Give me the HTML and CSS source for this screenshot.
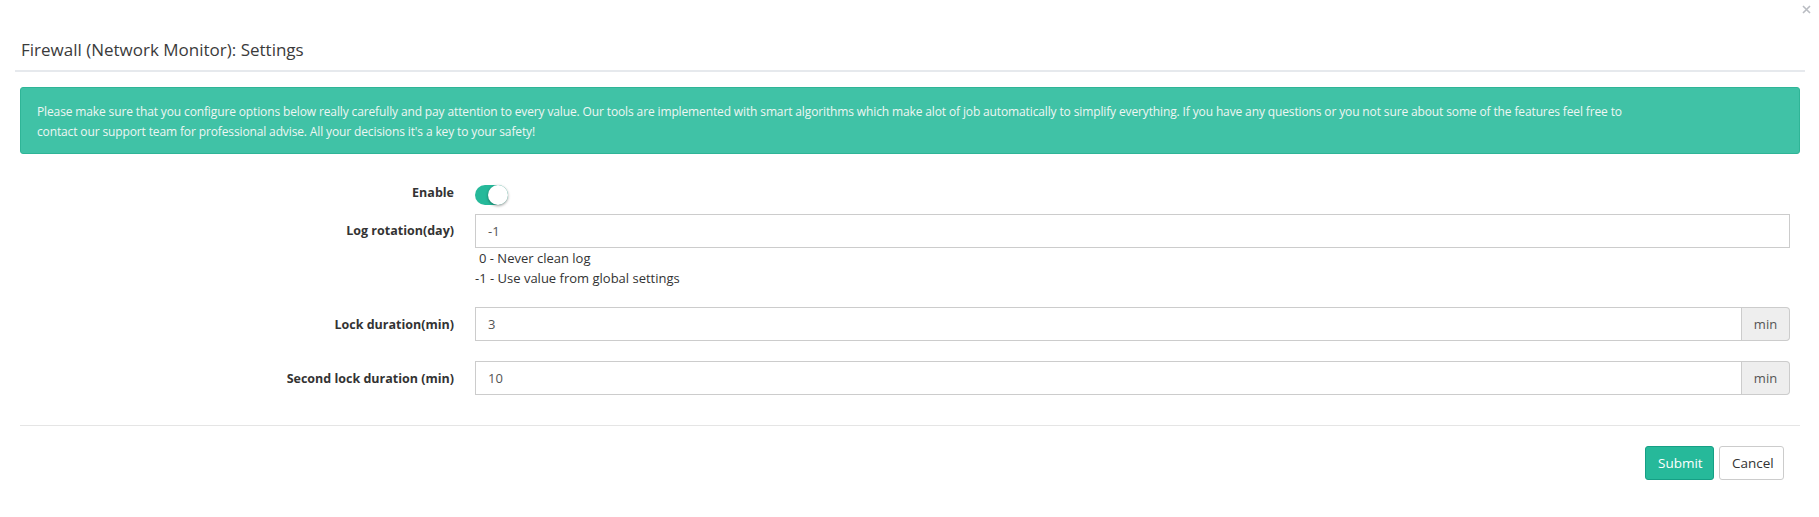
FILE: index.html
```html
<!DOCTYPE html>
<html lang="en">
<head>
<meta charset="utf-8">
<title>Firewall (Network Monitor): Settings</title>
<link rel="stylesheet" href="styles.css">
</head>
<body>
<div class="modal">
  <button class="close" type="button" aria-label="Close">
    <svg width="9" height="9" viewBox="0 0 9 9"><path d="M1 1L8 8M8 1L1 8" stroke="#b9bcc2" stroke-width="1.6" fill="none"/></svg>
  </button>
  <div class="modal-header">
    <h4 class="modal-title">Firewall (Network Monitor): Settings</h4>
  </div>
  <div class="modal-body">
    <div class="alert">Please make sure that you configure options below really carefully and pay attention to every value. Our tools are implemented with smart algorithms which make alot of job automatically to simplify everything. If you have any questions or you not sure about some of the features feel free to<br>contact our support team for professional advise. All your decisions it's a key to your safety!</div>
    <form class="form">
      <div class="row row-enable">
        <label class="lbl lbl-enable">Enable</label>
        <div class="ctrl"><span class="switch"><span class="knob"></span></span></div>
      </div>
      <div class="row row-top">
        <label class="lbl lbl-input">Log rotation(day)</label>
        <div class="ctrl">
          <input class="input" type="text" value="-1">
          <div class="help">
            <div class="help-line help-indent">0 - Never clean log</div>
            <div class="help-line">-1 - Use value from global settings</div>
          </div>
        </div>
      </div>
      <div class="row row-lock">
        <label class="lbl">Lock duration(min)</label>
        <div class="ctrl group">
          <input class="input input-group" type="text" value="3">
          <span class="addon">min</span>
        </div>
      </div>
      <div class="row row-lock2">
        <label class="lbl">Second lock duration (min)</label>
        <div class="ctrl group">
          <input class="input input-group" type="text" value="10">
          <span class="addon">min</span>
        </div>
      </div>
    </form>
  </div>
  <div class="modal-footer">
    <button class="btn btn-success" type="button">Submit</button>
    <button class="btn btn-default" type="button">Cancel</button>
  </div>
</div>
</body>
</html>
```

FILE: styles.css
```css
* { box-sizing: border-box; }
html, body { margin: 0; padding: 0; background: #fff; }
body {
  font-family: "Open Sans", "Noto Sans", sans-serif;
  font-size: 13px;
  color: #333;
}
.modal { position: relative; width: 1819px; height: 517px; background: #fff; }
.close {
  position: absolute; top: 5px; right: 8px;
  border: 0; background: none; padding: 0; width: 9px; height: 9px; line-height: 0;
}
.modal-header {
  margin: 0 14px 0 15px;
  padding: 38px 0 8px 6px;
  border-bottom: 2px solid #e6e9ed;
}
.modal-title {
  margin: 0; font-size: 17px; line-height: 24px; font-weight: 400; color: #3b3b3b;
}
.modal-body { padding: 15px 19px 30px 20px; }
.alert {
  background: rgba(38, 185, 154, 0.88);
  border: 1px solid #2fb597;
  border-radius: 3px;
  color: #eef6f3;
  padding: 14px 16px 11px 16px;
  font-size: 12px;
  letter-spacing: -0.13px;
  line-height: 20px;
  white-space: nowrap;
}
.form { margin-top: 30px; }
.row {
  display: grid;
  grid-template-columns: 434px 1fr;
  column-gap: 21px;
  padding-right: 10px;
}
.lbl {
  text-align: right; font-weight: 700; font-size: 12.5px; color: #333;
  align-self: center;
}
.lbl-enable { align-self: start; line-height: 18px; }
.lbl-input { align-self: start; line-height: 34px; }
.row-enable { height: 22px; margin-bottom: 8px; }
.switch {
  display: block; position: relative; margin-top: 1px;
  width: 33px; height: 20px; border-radius: 10px; background: #26b99a;
}
.knob {
  position: absolute; right: 0; top: 0; width: 20px; height: 20px; border-radius: 50%;
  background: #fff; box-shadow: 0 1px 3px rgba(0, 0, 0, 0.4);
}
.input {
  display: block; width: 100%; height: 34px;
  border: 1px solid #ccc; border-radius: 0;
  padding: 6px 12px;
  font-family: inherit; font-size: 13px; color: #555;
  outline: none;
}
.help-line { line-height: 20px; font-size: 13px; color: #333; }
.help-indent { padding-left: 4px; }
.row-lock { margin-top: 19px; }
.row-lock2 { margin-top: 20px; }
.group { display: flex; }
.input-group { flex: 1; width: auto; border-radius: 0; }
.addon {
  width: 48px; height: 34px; flex: none;
  background: #eee; border: 1px solid #ccc; border-left: 0;
  border-radius: 0 4px 4px 0;
  display: flex; align-items: center; justify-content: center;
  font-size: 13px; color: #555;
}
.modal-footer {
  margin: 0 19px 0 20px;
  border-top: 1px solid #e5e5e5;
  padding: 20px 16px 0 0;
  display: flex; justify-content: flex-end; gap: 5px;
}
.btn {
  height: 34px; padding: 6px 12px; border-radius: 3px;
  font-family: inherit; font-size: 13.5px; line-height: 20px; cursor: pointer;
}
.btn-success { background: #26b99a; border: 1px solid #169f85; color: #fff; width: 69px; }
.btn-default { background: #fff; border: 1px solid #ccc; color: #333; width: 65px; }
```
